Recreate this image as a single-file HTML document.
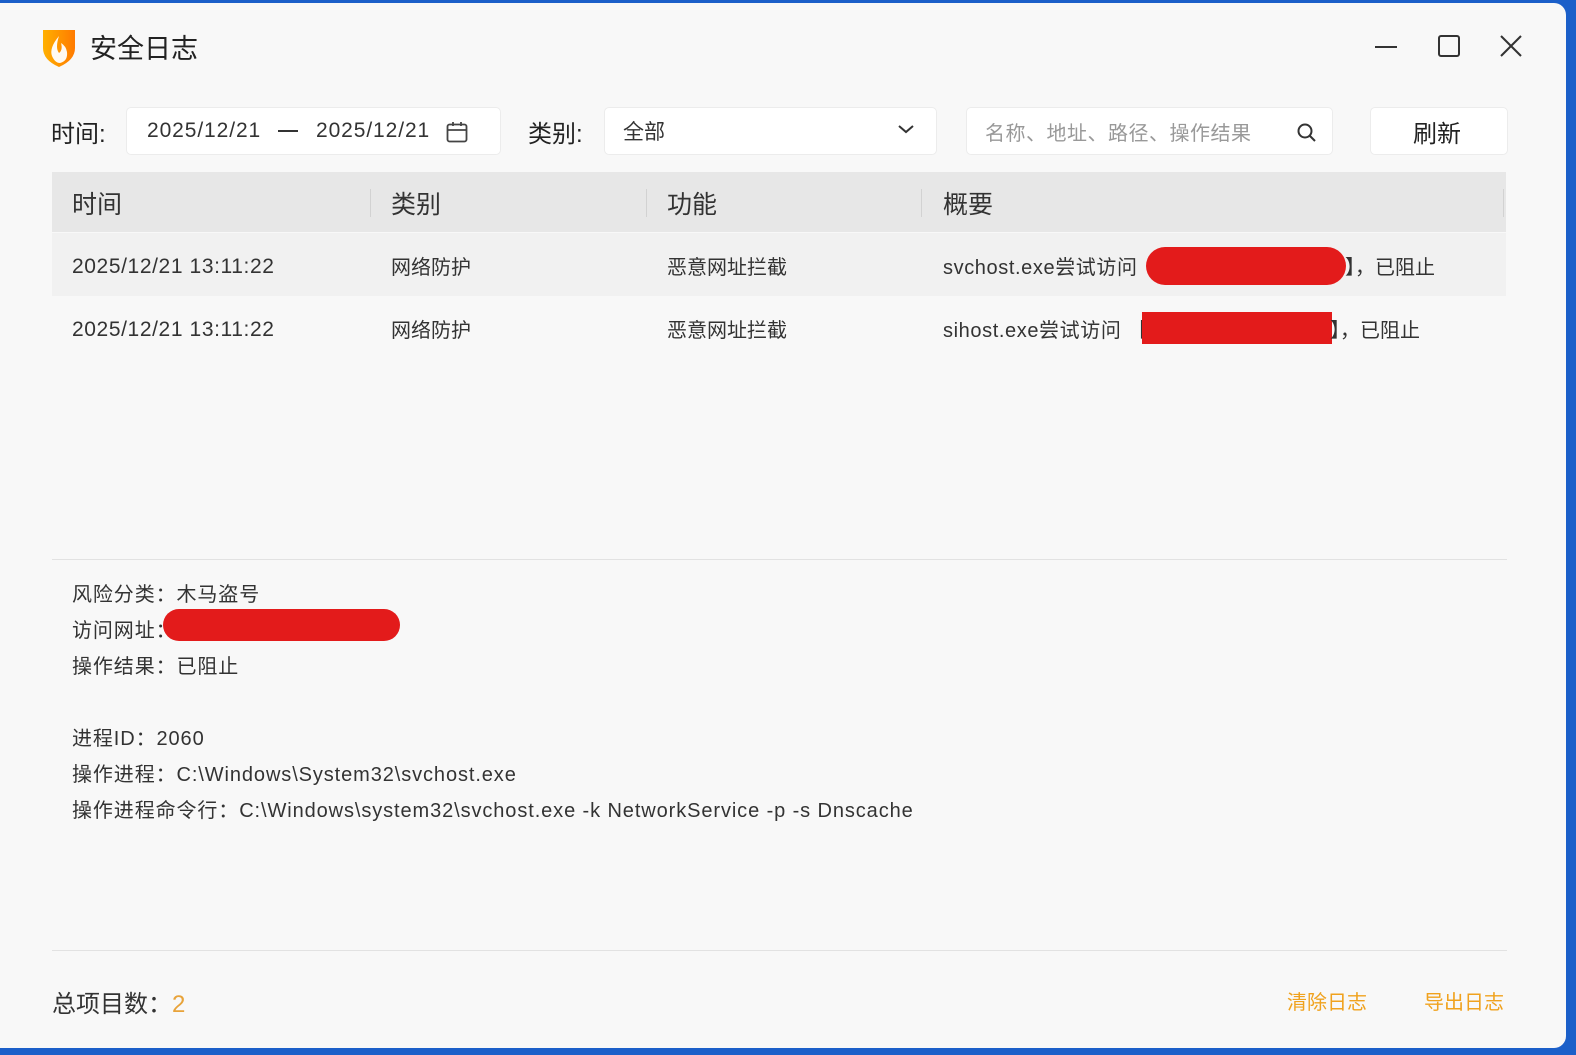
<!DOCTYPE html>
<html><head><meta charset="utf-8"><style>
*{margin:0;padding:0;box-sizing:border-box}
body{width:1576px;height:1055px;background:#1b5fc9;position:relative;overflow:hidden;font-family:"Liberation Sans","Noto Sans CJK SC",sans-serif;color:#333}
.win{position:absolute;left:0;top:3px;width:1566px;height:1045px;background:#f8f8f8;border-radius:0 12px 12px 0}
.a{position:absolute;white-space:nowrap}
.box{position:absolute;background:#fff;border:1px solid #ececec;border-radius:5px}
.red{position:absolute;background:#e31b1b}
.ls{letter-spacing:.6px}
</style></head><body>
<div class="win">
<svg class="a" style="left:41px;top:23px" width="36" height="42" viewBox="0 0 36 42">
<defs><linearGradient id="g" x1="0" x2="1"><stop offset="0" stop-color="#ffb000"/><stop offset="1" stop-color="#ff7a00"/></linearGradient></defs>
<path d="M2 4 L34 4 L34 22 Q34 34 18 41 Q2 34 2 22 Z" fill="url(#g)"/>
<path d="M18 10 Q8 22 11 30 Q14 37 19 37 Q27 35 26 26 Q25 20 20 17 Q22 24 18 27 Q14 22 18 10Z" fill="#fff" opacity=".95"/>
</svg>
<div class="a" style="left:90px;top:24px;font-size:27px;color:#222">安全日志</div>
<svg class="a" style="left:1370px;top:28px" width="160" height="32"><g stroke="#333" stroke-width="2" fill="none"><line x1="5" y1="16" x2="27" y2="16"/><rect x="69" y="5" width="20" height="20" rx="2"/><line x1="131" y1="5" x2="151" y2="25"/><line x1="151" y1="5" x2="131" y2="25"/></g></svg>

<div class="a" style="left:51px;top:111px;font-size:24px;color:#222">时间:</div>
<div class="box" style="left:126px;top:104px;width:375px;height:48px"></div>
<div class="a" style="left:147px;top:116px;font-size:21px;letter-spacing:.9px">2025/12/21</div>
<div class="a" style="left:278px;top:127px;width:20px;height:2px;background:#333"></div>
<div class="a" style="left:316px;top:116px;font-size:21px;letter-spacing:.9px">2025/12/21</div>
<svg class="a" style="left:446px;top:118px" width="22" height="22"><rect x="1.5" y="3.5" width="19" height="17" rx="2" fill="none" stroke="#444" stroke-width="1.8"/><line x1="1.5" y1="9" x2="20.5" y2="9" stroke="#444" stroke-width="1.8"/><line x1="7" y1="1" x2="7" y2="5" stroke="#444" stroke-width="1.8"/><line x1="15" y1="1" x2="15" y2="5" stroke="#444" stroke-width="1.8"/></svg>
<div class="a" style="left:528px;top:111px;font-size:24px;color:#222">类别:</div>
<div class="box" style="left:604px;top:104px;width:333px;height:48px"></div>
<div class="a" style="left:623px;top:113px;font-size:21px">全部</div>
<svg class="a" style="left:897px;top:120px" width="18" height="12"><path d="M2 3 L9 9 L16 3" stroke="#333" stroke-width="2" fill="none"/></svg>
<div class="box" style="left:966px;top:104px;width:367px;height:48px"></div>
<div class="a" style="left:985px;top:114px;font-size:20px;color:#999;letter-spacing:.5px">名称、地址、路径、操作结果</div>
<svg class="a" style="left:1296px;top:119px" width="22" height="22"><circle cx="9" cy="9" r="6.5" stroke="#333" stroke-width="2" fill="none"/><line x1="14" y1="14" x2="19" y2="19" stroke="#333" stroke-width="2"/></svg>
<div class="box" style="left:1370px;top:104px;width:138px;height:48px"></div>
<div class="a" style="left:1413px;top:111px;font-size:24px;color:#222">刷新</div>

<div class="a" style="left:52px;top:169px;width:1454px;height:60px;background:#e7e7e7"></div>
<div class="a" style="left:370px;top:186px;width:1px;height:28px;background:#d2d2d2"></div>
<div class="a" style="left:646px;top:186px;width:1px;height:28px;background:#d2d2d2"></div>
<div class="a" style="left:921px;top:186px;width:1px;height:28px;background:#d2d2d2"></div>
<div class="a" style="left:1503px;top:186px;width:1px;height:28px;background:#d2d2d2"></div>
<div class="a" style="left:72px;top:182px;font-size:25px">时间</div>
<div class="a" style="left:391px;top:182px;font-size:25px">类别</div>
<div class="a" style="left:667px;top:182px;font-size:25px">功能</div>
<div class="a" style="left:943px;top:182px;font-size:25px">概要</div>
<div class="a" style="left:52px;top:230px;width:1454px;height:63px;background:#f1f1f1"></div>
<div class="a ls" style="left:72px;top:252px;font-size:21px">2025/12/21 13:11:22</div>
<div class="a" style="left:391px;top:248px;font-size:20px">网络防护</div>
<div class="a" style="left:667px;top:248px;font-size:20px">恶意网址拦截</div>
<div class="a ls" style="left:943px;top:248px;font-size:20px">svchost.exe尝试访问 【</div>
<div class="red" style="left:1146px;top:244px;width:200px;height:38px;border-radius:20px"></div>
<div class="a" style="left:1345px;top:248px;font-size:20px">】，已阻止</div>
<div class="a ls" style="left:72px;top:315px;font-size:21px">2025/12/21 13:11:22</div>
<div class="a" style="left:391px;top:311px;font-size:20px">网络防护</div>
<div class="a" style="left:667px;top:311px;font-size:20px">恶意网址拦截</div>
<div class="a ls" style="left:943px;top:311px;font-size:20px">sihost.exe尝试访问 【</div>
<div class="red" style="left:1142px;top:309px;width:190px;height:32px"></div>
<div class="a" style="left:1330px;top:311px;font-size:20px">】，已阻止</div>

<div class="a" style="left:52px;top:556px;width:1455px;height:1px;background:#e2e2e2"></div>
<div class="a" style="left:72px;top:574px;font-size:20px;line-height:36px;letter-spacing:.9px">风险分类：木马盗号<br>访问网址：<br>操作结果：已阻止<br><br>进程ID：2060<br>操作进程：C:\Windows\System32\svchost.exe<br>操作进程命令行：C:\Windows\system32\svchost.exe -k NetworkService -p -s Dnscache</div>
<div class="red" style="left:163px;top:606px;width:237px;height:32px;border-radius:16px"></div>
<div class="a" style="left:52px;top:947px;width:1455px;height:1px;background:#e2e2e2"></div>
<div class="a" style="left:52px;top:981px;font-size:24px">总项目数：<span style="color:#e8a33a">2</span></div>
<div class="a" style="left:1287px;top:983px;font-size:20px;color:#f0a21e">清除日志</div>
<div class="a" style="left:1424px;top:983px;font-size:20px;color:#f0a21e">导出日志</div>
</div>
</body></html>
